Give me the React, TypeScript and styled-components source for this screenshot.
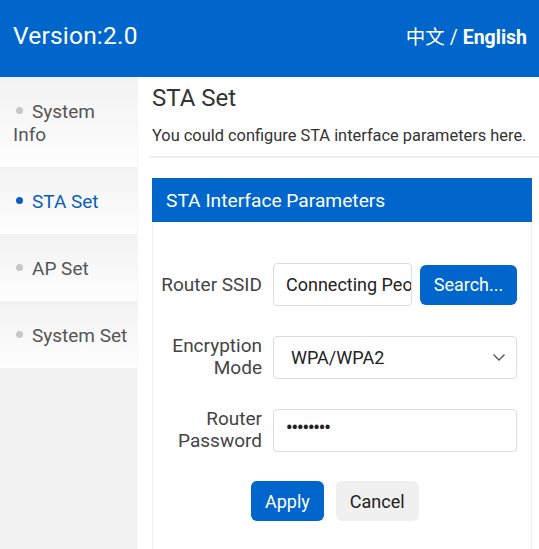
import React from "react";
import styled, { createGlobalStyle } from "styled-components";

const GlobalStyle = createGlobalStyle`
  html, body { margin: 0; padding: 0; background: #fff; }
  body { font-family: Roboto, "Noto Sans CJK SC", sans-serif; color: #333; }
  * { box-sizing: border-box; }
`;

const Page = styled.div`
  width: 539px;
  height: 549px;
  overflow: hidden;
  display: flex;
  flex-direction: column;
`;

const Header = styled.header`
  height: 77px;
  flex: none;
  background: #0066cc;
  color: #fff;
  display: flex;
  align-items: center;
  justify-content: space-between;
  padding: 0 12px 6px 13px;
`;

const Version = styled.div`
  font-size: 24.5px;
  letter-spacing: 0.2px;
`;

const Lang = styled.div`
  font-size: 19.5px;
  display: flex;
  gap: 5px;
  align-items: baseline;
`;

const LangItem = styled.span<{ $active?: boolean }>`
  font-weight: ${(p) => (p.$active ? 700 : 400)};
  font-family: ${(p) => (p.$active ? "Roboto" : '"Noto Sans CJK SC"')}, sans-serif;
`;

const Body = styled.div`
  flex: 1;
  display: flex;
  min-height: 0;
`;

const Sidebar = styled.nav`
  width: 137px;
  flex: none;
  background: #f2f2f2;
  display: flex;
  flex-direction: column;
  gap: 1px;
  padding-top: 1px;
`;

const NavItem = styled.div<{ $active?: boolean }>`
  background: linear-gradient(#f2f2f2, #fefefe);
  padding: 22px 8px 21px 13px;
  font-size: 19px;
  line-height: 23px;
  color: ${(p) => (p.$active ? "#0a5fb8" : "#555")};
`;

const Bullet = styled.span<{ $active?: boolean }>`
  display: inline-block;
  width: 7px;
  height: 7px;
  border-radius: 50%;
  background: ${(p) => (p.$active ? "#0a5fb8" : "#c8c8c8")};
  margin: 0 9px 0 3px;
  vertical-align: middle;
  position: relative;
  top: -2px;
`;

const Main = styled.main`
  flex: 1;
  padding: 0 0 0 14px;
  min-width: 0;
  border-left: 1px solid #f6f6f6;
`;

const Title = styled.h1`
  margin: 0;
  padding-top: 7px;
  font-size: 24px;
  font-weight: 400;
  line-height: 29px;
  color: #333;
`;

const Subtitle = styled.p`
  margin: 0 0 0 -3px;
  padding: 12px 0 9px 3px;
  font-size: 16.4px;
  line-height: 22px;
  color: #333;
  border-bottom: 2px solid #ececec;
`;

const Panel = styled.section`
  margin: 20px 7px 0 0;
  border: 1px solid #f0f0f0;
  border-top: none;
  height: 400px;
`;

const PanelHeader = styled.div`
  background: #0066cc;
  color: #fff;
  height: 44px;
  display: flex;
  align-items: center;
  padding-left: 14px;
  font-size: 19.2px;
  margin: 0 -1px;
`;

const Form = styled.div`
  padding: 41px 14px 0 7px;
  display: flex;
  flex-direction: column;
  gap: 29px;
`;

const Row = styled.div`
  display: flex;
  align-items: center;
  gap: 11px;
`;

const Label = styled.div`
  width: 102px;
  flex: none;
  text-align: right;
  font-size: 19px;
  line-height: 22px;
  color: #444;
`;

const Field = styled.div<{ $w?: number }>`
  height: 43px;
  width: ${(p) => (p.$w ? `${p.$w}px` : "auto")};
  flex: ${(p) => (p.$w ? "none" : "1")};
  border: 1px solid #dcdcdc;
  border-radius: 4px;
  display: flex;
  align-items: center;
  padding: 0 12px;
  font-size: 18px;
  color: #222;
  overflow: hidden;
  white-space: nowrap;
`;

const SelectField = styled(Field)`
  justify-content: space-between;
  padding: 0 10px 0 17px;
`;

const Dots = styled.span`
  font-size: 18px;
  letter-spacing: -1px;
  position: relative;
  top: -3px;
  font-weight: 700;
`;

const Button = styled.button<{ $primary?: boolean }>`
  height: 40px;
  border: none;
  border-radius: 6px;
  padding: 0 14px;
  font-family: Roboto, sans-serif;
  font-size: 18px;
  background: ${(p) => (p.$primary ? "#0066cc" : "#f0f0f0")};
  color: ${(p) => (p.$primary ? "#fff" : "#222")};
`;

const SearchButton = styled(Button)`
  margin-left: -3px;
  width: 97px;
  padding: 0;
`;

const ButtonRow = styled.div`
  display: flex;
  gap: 12px;
  padding-left: 91px;
`;

const Chevron = () => (
  <svg width="14" height="9" viewBox="0 0 14 9" fill="none">
    <path d="M1.5 1.5 L7 7 L12.5 1.5" stroke="#555" strokeWidth="1.4" />
  </svg>
);

export default function App() {
  return (
    <Page>
      <GlobalStyle />
      <Header>
        <Version>Version:2.0</Version>
        <Lang>
          <LangItem>中文</LangItem>
          <span>/</span>
          <LangItem $active>English</LangItem>
        </Lang>
      </Header>
      <Body>
        <Sidebar>
          <NavItem>
            <Bullet />System Info
          </NavItem>
          <NavItem $active>
            <Bullet $active />STA Set
          </NavItem>
          <NavItem>
            <Bullet />AP Set
          </NavItem>
          <NavItem>
            <Bullet />System Set
          </NavItem>
        </Sidebar>
        <Main>
          <Title>STA Set</Title>
          <Subtitle>You could configure STA interface parameters here.</Subtitle>
          <Panel>
            <PanelHeader>STA Interface Parameters</PanelHeader>
            <Form>
              <Row>
                <Label>Router SSID</Label>
                <Field $w={139}>Connecting People</Field>
                <SearchButton $primary>Search...</SearchButton>
              </Row>
              <Row>
                <Label>Encryption Mode</Label>
                <SelectField>
                  WPA/WPA2
                  <Chevron />
                </SelectField>
              </Row>
              <Row>
                <Label>Router Password</Label>
                <Field>
                  <Dots>••••••••</Dots>
                </Field>
              </Row>
              <ButtonRow>
                <Button $primary>Apply</Button>
                <Button>Cancel</Button>
              </ButtonRow>
            </Form>
          </Panel>
        </Main>
      </Body>
    </Page>
  );
}
